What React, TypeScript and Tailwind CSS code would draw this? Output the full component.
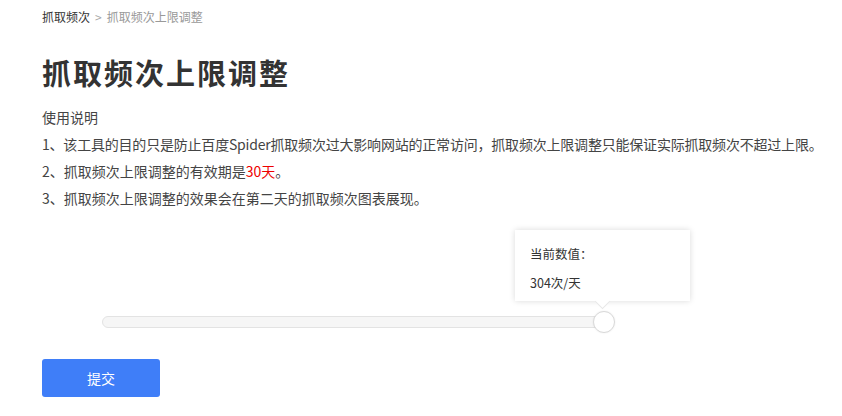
import React from 'react';

const font = { fontFamily: '"Noto Sans CJK SC", "Noto Sans", sans-serif' };

export default function App() {
  return (
    <div className="min-h-screen bg-white px-[42px] pt-[9px] text-[#444]" style={font}>
      <div className="text-[12px] leading-[16px]">
        <span className="text-[#333]">抓取频次</span>
        <span className="mx-[5px] text-[#aaa]">&gt;</span>
        <span className="text-[#999]">抓取频次上限调整</span>
      </div>

      <h1 className="mt-[29px] text-[29px] font-bold leading-[36px] tracking-[2px] text-[#333]">
        抓取频次上限调整
      </h1>

      <div className="mt-[14px] whitespace-nowrap text-[14px] leading-[27px]">
        <p>使用说明</p>
        <p className="tracking-[-0.2px]">1、该工具的目的只是防止百度Spider抓取频次过大影响网站的正常访问，抓取频次上限调整只能保证实际抓取频次不超过上限。</p>
        <p>
          2、抓取频次上限调整的有效期是<span className="text-[#e00]">30天</span>。
        </p>
        <p>3、抓取频次上限调整的效果会在第二天的抓取频次图表展现。</p>
      </div>

      <div className="pt-[104px] pl-[60px]">
        <div className="relative h-[12px] w-[500px] rounded-full border border-[#e3e3e3] bg-[#f6f6f6]">
          <div className="absolute left-[412px] top-[-87px] h-[71px] w-[175px] bg-white px-[15px] pt-[9px] text-[12.5px] leading-[29px] text-[#333] shadow-[0_0_6px_rgba(0,0,0,0.15)]">
            <p>当前数值：</p>
            <p>304次/天</p>
            <div className="absolute bottom-[-6px] left-[82px] h-[11px] w-[11px] rotate-45 border-b border-r border-[#e8e8e8] bg-white" />
          </div>
          <div className="absolute left-[490px] top-[-6px] h-[22px] w-[22px] rounded-full border border-[#d9d9d9] bg-white shadow-[0_0_2px_rgba(0,0,0,0.08)]" />
        </div>
      </div>

      <button className="mt-[31px] flex h-[38px] w-[118px] items-center justify-center rounded-[3px] bg-[#3f7ef8] text-[14px] text-white">
        提交
      </button>
    </div>
  );
}
